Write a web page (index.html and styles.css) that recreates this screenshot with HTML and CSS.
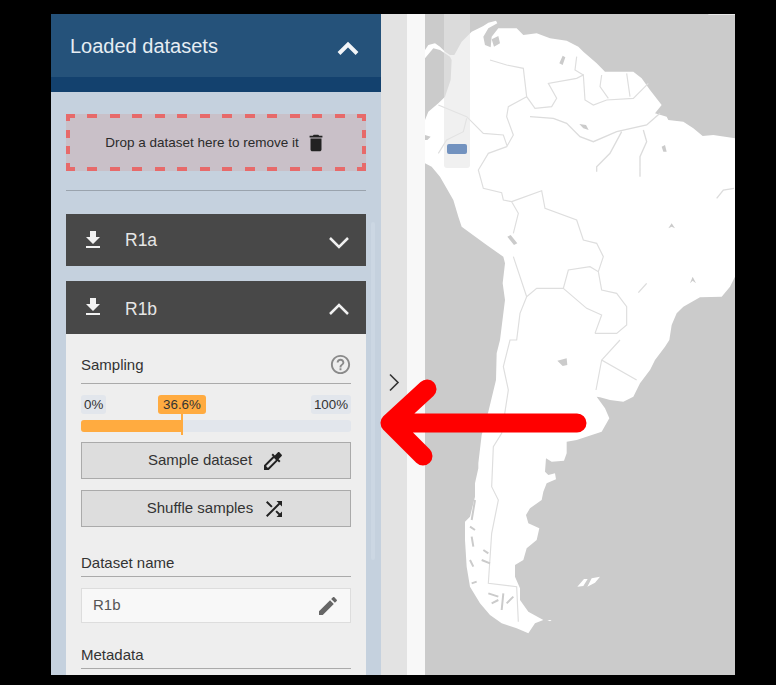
FILE: index.html
```html
<!DOCTYPE html>
<html lang="en">
<head>
<meta charset="utf-8">
<title>Loaded datasets</title>
<link rel="stylesheet" href="styles.css">
</head>
<body>
<div class="frame">
  <aside class="sidebar">
    <header class="side-head">
      <h1 class="side-title">Loaded datasets</h1>
      <svg class="head-chevron" width="24" height="18" viewBox="0 0 24 18"><polyline points="3,14.5 12,5.5 21,14.5"/></svg>
    </header>
    <div class="head-strip"></div>
    <div class="side-body">
      <div class="dropzone">
        <span>Drop a dataset here to remove it</span>
        <svg class="trash" width="22" height="22" viewBox="0 0 24 24"><path d="M6 19c0 1.1.9 2 2 2h8c1.1 0 2-.9 2-2V7H6v12zM19 4h-3.5l-1-1h-5l-1 1H5v2h14V4z"/></svg>
      </div>
      <hr class="rule">
      <div class="ds-bar ds-bar-a">
        <svg class="dl" width="24" height="24" viewBox="0 0 24 24"><path d="M19 9h-4V3H9v6H5l7 7 7-7zM5 18v2h14v-2H5z"/></svg>
        <span class="ds-name">R1a</span>
        <svg class="ds-chevron" width="24" height="16" viewBox="0 0 24 16"><polyline points="3,3 12,12 21,3"/></svg>
      </div>
      <div class="ds-bar ds-bar-b">
        <svg class="dl" width="24" height="24" viewBox="0 0 24 24"><path d="M19 9h-4V3H9v6H5l7 7 7-7zM5 18v2h14v-2H5z"/></svg>
        <span class="ds-name">R1b</span>
        <svg class="ds-chevron" width="24" height="16" viewBox="0 0 24 16"><polyline points="3,13 12,4 21,13"/></svg>
      </div>
      <section class="panel">
        <div class="sec-head sec-sampling">
          <span>Sampling</span>
          <svg class="help" width="23" height="23" viewBox="0 0 24 24"><path d="M11 18h2v-2h-2v2zm1-16C6.48 2 2 6.48 2 12s4.48 10 10 10 10-4.48 10-10S17.52 2 12 2zm0 18c-4.41 0-8-3.59-8-8s3.59-8 8-8 8 3.59 8 8-3.59 8-8 8zm0-14c-2.21 0-4 1.79-4 4h2c0-1.1.9-2 2-2s2 .9 2 2c0 2-3 1.75-3 5h2c0-2.25 3-2.5 3-5 0-2.21-1.79-4-4-4z"/></svg>
        </div>
        <div class="slider">
          <div class="slider-labels">
            <span class="tick">0%</span>
            <span class="tick">100%</span>
          </div>
          <span class="bubble">36.6%</span>
          <div class="track"><div class="fill"></div></div>
          <span class="marker"></span>
        </div>
        <button class="btn btn-first" type="button">
          <span>Sample dataset</span>
          <svg width="24" height="24" viewBox="0 0 24 24"><path d="M20.71 5.63l-2.34-2.34c-.39-.39-1.02-.39-1.41 0l-3.12 3.12-1.93-1.91-1.41 1.41 1.42 1.42L3 16.25V21h4.75l8.92-8.92 1.42 1.42 1.41-1.41-1.92-1.92 3.12-3.12c.4-.4.4-1.03.01-1.42zM6.92 19L5 17.08l8.06-8.06 1.92 1.92L6.92 19z"/></svg>
        </button>
        <button class="btn" type="button">
          <span>Shuffle samples</span>
          <svg width="24" height="24" viewBox="0 0 24 24"><path d="M10.59 9.17L5.41 4 4 5.41l5.17 5.17 1.42-1.41zM14.5 4l2.04 2.04L4 18.59 5.41 20 17.96 7.46 20 9.5V4h-5.5zm.33 9.41l-1.41 1.41 3.13 3.13L14.5 20H20v-5.5l-2.04 2.04-3.13-3.13z"/></svg>
        </button>
        <div class="sec-head sec-name"><span>Dataset name</span></div>
        <div class="field">
          <span>R1b</span>
          <svg width="24" height="24" viewBox="0 0 24 24"><path d="M3 17.25V21h3.75L17.81 9.94l-3.75-3.75L3 17.25zM20.71 7.04c.39-.39.39-1.02 0-1.41l-2.34-2.34c-.39-.39-1.02-.39-1.41 0l-1.83 1.83 3.75 3.75 1.83-1.83z"/></svg>
        </div>
        <div class="sec-head sec-meta"><span>Metadata</span></div>
      </section>
      <div class="scrollbar"></div>
    </div>
  </aside>
  <div class="collapse">
    <svg width="12" height="20" viewBox="0 0 12 20"><polyline points="2,1.5 10,9.5 2,17.5"/></svg>
  </div>
  <div class="gutter"></div>
  <div class="map">
    <svg class="map-svg" viewBox="15 42 930 1983" preserveAspectRatio="none">
      <path class="land" d="M15 150 L25 135 L45 130 L60 140 L75 155 L90 165 L103 165 L125 125 L155 95 L190 78 L205 68 L228 62 L232 70 L205 85 L190 110 L195 135 L212 142 L215 110 L235 85 L290 85 L310 105 L350 100 L390 115 L440 122 L475 140 L490 155 L530 190 L555 215 L600 215 L640 215 L665 235 L690 270 L725 315 L705 340 L740 350 L745 360 L790 365 L820 385 L848 408 L880 405 L945 415 L945 830 L930 860 L905 890 L840 892 L790 920 L770 940 L755 975 L748 1020 L735 1040 L705 1080 L690 1110 L660 1150 L640 1190 L610 1205 L570 1200 L540 1192 L530 1190 L555 1225 L568 1255 L545 1295 L470 1320 L440 1325 L440 1360 L432 1382 L395 1385 L378 1375 L375 1415 L385 1425 L405 1420 L408 1438 L380 1450 L370 1475 L365 1500 L330 1525 L318 1545 L325 1570 L358 1585 L350 1620 L320 1645 L310 1680 L285 1695 L285 1730 L300 1765 L300 1800 L325 1835 L370 1860 L345 1870 L325 1900 L290 1885 L245 1870 L210 1845 L180 1810 L150 1760 L140 1700 L135 1620 L135 1565 L150 1550 L165 1490 L165 1450 L175 1405 L175 1390 L185 1305 L205 1235 L228 1140 L230 1060 L240 1020 L255 900 L248 850 L255 790 L250 770 L200 735 L125 680 L115 650 L100 600 L60 530 L35 500 L15 490 L15 360 L25 335 L55 310 L75 290 L92 240 L95 180 L90 170 L60 150 L40 145 L15 175 Z"/>
      <path class="land" d="M472 1760 L492 1737 L503 1737 L490 1758 Z M502 1760 L515 1735 L540 1730 L525 1748 Z M382 1860 L395 1860 L390 1864 Z"/>
      <path class="sea" d="M215 118 L235 108 L240 130 L222 140 Z M418 190 L428 167 L436 172 L428 195 Z M478 372 L498 375 L506 390 L490 385 Z M725 440 L735 435 L740 455 L730 455 Z M262 710 L272 705 L292 730 L282 735 Z M412 1082 L440 1075 L442 1095 L428 1098 Z M15 405 L32 410 L22 420 L15 420 Z M745 685 L755 670 L765 685 L755 680 Z M810 850 L818 830 L828 850 L818 842 Z"/>
      <path class="border" d="M210 180 L260 195 L310 205 L320 290 L345 325 L395 320 L410 295 L385 250 L470 235 L490 225 L495 300 L520 315 L560 300 L640 295 L685 250 M545 225 L540 260 L565 295 M620 220 L630 290 M470 170 L465 210 L490 225 M320 290 L265 320 L260 350 L280 405 L260 440 L205 460 L175 510 L190 565 L245 578 L250 600 L275 605 M55 315 L140 350 L190 400 L250 405 L262 440 M140 355 L130 395 L80 420 L55 460 M275 605 L295 640 L280 700 M275 605 L365 572 L375 625 L470 660 L490 720 L530 730 L550 770 L535 815 L510 800 L445 810 L430 865 L350 865 L320 890 L280 770 M430 865 L500 925 L545 945 L525 1000 M535 815 L545 870 L590 880 L620 920 L620 975 L590 1000 L525 1000 M320 890 L300 940 L290 1020 L270 1020 L250 1100 L265 1170 L245 1300 L220 1340 L215 1460 L235 1500 L215 1600 L205 1750 L290 1760 L295 1865 M600 1020 L545 1080 L650 1140 M545 1080 L528 1170"/>
      <path class="river" d="M330 350 L400 355 L440 370 L480 410 L520 425 L590 395 L680 375 L720 340 M605 395 L570 460 L530 500 L530 515 M670 390 L680 425 L660 470 L660 530 M655 878 L680 850 M890 595 L910 570 L942 565"/>
      <path class="fjord" d="M165 1500 L155 1560 M150 1580 L165 1590 M155 1610 L160 1640 M185 1680 L210 1690 M190 1650 L205 1660 M150 1680 L160 1700 M155 1750 L170 1745 M205 1780 L235 1790 M215 1810 L235 1800 M250 1780 L245 1830 M260 1810 L280 1790"/>
      <rect class="map-edge" x="865" y="42" width="80" height="3"/>
    </svg>
    <div class="brush"><div class="brush-handle"></div></div>
  </div>
  <svg class="arrow" width="220" height="100" viewBox="0 0 220 100"><path d="M207 46 H20 M57 12 L20 46 L53 79"/></svg>
</div>
</body>
</html>
```

FILE: styles.css
```css
* { box-sizing: border-box; }
html, body { margin: 0; height: 100%; }
body {
  background: #000;
  padding: 14px 41px 10px 51px;
  overflow: hidden;
  font-family: "Liberation Sans", Arial, sans-serif;
}
.frame {
  position: relative;
  display: flex;
  height: 661px;
}
.sidebar {
  width: 330px;
  flex: none;
  background: #c5d1de;
  overflow: hidden;
  display: flex;
  flex-direction: column;
}
.side-head {
  height: 63px;
  flex: none;
  background: #25527a;
  display: flex;
  align-items: center;
  justify-content: space-between;
  padding: 0 21px 0 19px;
}
.side-title {
  margin: 2px 0 0;
  font-size: 20px;
  font-weight: 400;
  color: #e6edf3;
}
.head-chevron polyline { fill: none; stroke: #f2f5f8; stroke-width: 4; }
.head-chevron { margin-top: 4px; }
.head-strip { height: 15px; flex: none; background: #13416e; }
.side-body {
  position: relative;
  flex: 1;
  padding: 22px 15px 0;
  min-height: 0;
}
.dropzone {
  height: 57px;
  display: flex;
  align-items: center;
  justify-content: center;
  gap: 6px;
  font-size: 13.5px;
  color: #2b2b2b;
  background-color: #c9c0c8;
  background-image:
    repeating-linear-gradient(90deg, #e76a6a 0 8.8px, transparent 8.8px 21.3px, #e76a6a 21.3px 22.5px),
    repeating-linear-gradient(90deg, #e76a6a 0 8.8px, transparent 8.8px 21.3px, #e76a6a 21.3px 22.5px),
    repeating-linear-gradient(180deg, #e76a6a 0 7.5px, transparent 7.5px 16px, #e76a6a 16px 16.5px),
    repeating-linear-gradient(180deg, #e76a6a 0 7.5px, transparent 7.5px 16px, #e76a6a 16px 16.5px);
  background-size: 100% 4px, 100% 4px, 4px 100%, 4px 100%;
  background-position: top left, bottom left, top left, top right;
  background-repeat: no-repeat;
}
.trash path { fill: #222; }
.rule {
  margin: 19px 0 23px;
  border: 0;
  height: 1px;
  background: #9aa3ad;
}
.ds-bar {
  height: 52px;
  background: #484848;
  display: flex;
  align-items: center;
  padding: 0 15px;
  color: #e6e6e6;
}
.ds-bar-b { height: 53px; margin-top: 15px; }
.dl { margin-bottom: 1px; }
.dl path { fill: #f2f2f2; }
.ds-name {
  margin-left: 20px;
  font-size: 17.5px;
  flex: 1;
  margin-bottom: -1px;
}
.ds-bar-b .ds-name { margin-bottom: -3px; }
.ds-chevron { margin-top: 5px; }
.ds-bar-b .ds-chevron { margin-top: 3px; }
.ds-chevron polyline { fill: none; stroke: #f0f0f0; stroke-width: 2.5; }
.panel {
  background: #eee;
  padding: 0 15px 40px;
  color: #333;
}
.sec-head {
  display: flex;
  align-items: center;
  justify-content: space-between;
  border-bottom: 1px solid #aaa;
  font-size: 15px;
  color: #333;
}
.sec-sampling { height: 50px; padding-top: 12px; }
.sec-sampling span { margin-top: -1px; }
.help path { fill: #8a8a8a; }
.help { margin: 0 -1px 0 0; }
.slider { position: relative; height: 58px; }
.slider-labels {
  display: flex;
  justify-content: space-between;
  padding-top: 11px;
}
.tick {
  height: 19px;
  line-height: 19px;
  padding: 0 3px;
  font-size: 13.33px;
  color: #333;
  background: #e2e6ec;
  border-radius: 3px;
}
.bubble {
  position: absolute;
  left: 77px;
  top: 11px;
  width: 48px;
  height: 19px;
  line-height: 19px;
  text-align: center;
  font-size: 13.33px;
  color: #333;
  background: #ffab40;
  border-radius: 3px;
}
.track {
  position: absolute;
  left: 0;
  right: 0;
  top: 36px;
  height: 12px;
  background: #e2e6ec;
  border-radius: 3px;
  overflow: hidden;
}
.fill { width: 101px; height: 100%; background: #ffab40; }
.marker {
  position: absolute;
  left: 100px;
  top: 30px;
  width: 2px;
  height: 21px;
  background: #ffab40;
}
.btn {
  display: flex;
  align-items: center;
  justify-content: center;
  gap: 9px;
  width: 100%;
  height: 37px;
  margin: 11px 0 0;
  padding: 0 0 0 1px;
  background: #ddd;
  border: 1px solid #aaa;
  font-family: inherit;
  font-size: 15px;
  color: #333;
}
.btn-first { margin-top: 0; }
.btn span { margin-bottom: 3px; }
.btn svg path { fill: #222; }
.sec-name { height: 50px; padding-top: 22px; }
.field {
  display: flex;
  align-items: center;
  justify-content: space-between;
  height: 35px;
  margin-top: 11px;
  padding: 0 10px 0 11px;
  background: #f8f8f8;
  border: 1px solid #ddd;
  font-size: 15px;
  color: #555;
}
.field span { margin-bottom: 3px; }
.field path { fill: #666; }
.sec-meta { height: 46px; padding-top: 17px; }
.scrollbar {
  position: absolute;
  left: 320px;
  top: 130px;
  width: 4px;
  height: 338px;
  background: #ccd7e3;
  border-radius: 2px;
}
.collapse {
  width: 26px;
  flex: none;
  background: #e3e3e3;
  display: flex;
  justify-content: center;
  padding: 359px 0 0 0;
}
.collapse svg polyline { fill: none; stroke: #333; stroke-width: 1.6; }
.gutter { width: 18px; flex: none; background: #f8f8f8; }
.map {
  position: relative;
  flex: 1;
  background: #cbcbcb;
  overflow: hidden;
}
.map-svg { display: block; width: 100%; height: 100%; filter: blur(0.4px); }
.land { fill: #fff; }
.sea { fill: #cbcbcb; }
.border { fill: none; stroke: #dedede; stroke-width: 3.5; }
.river { fill: none; stroke: #dcdcdc; stroke-width: 4; }
.fjord { fill: none; stroke: #cbcbcb; stroke-width: 6; }
.map-edge { fill: #e9e9e9; }
.brush {
  position: absolute;
  left: 19px;
  top: 0;
  width: 26px;
  height: 154px;
  background: rgba(230, 230, 230, 0.6);
  border-radius: 0 0 3px 3px;
}
.brush-handle {
  position: absolute;
  left: 3px;
  top: 130px;
  width: 20px;
  height: 10px;
  background: #7292bf;
  border-radius: 2px;
}
.arrow {
  position: absolute;
  left: 319px;
  top: 363px;
}
.arrow path {
  fill: none;
  stroke: #f00;
  stroke-width: 19;
  stroke-linecap: round;
  stroke-linejoin: round;
}
```
